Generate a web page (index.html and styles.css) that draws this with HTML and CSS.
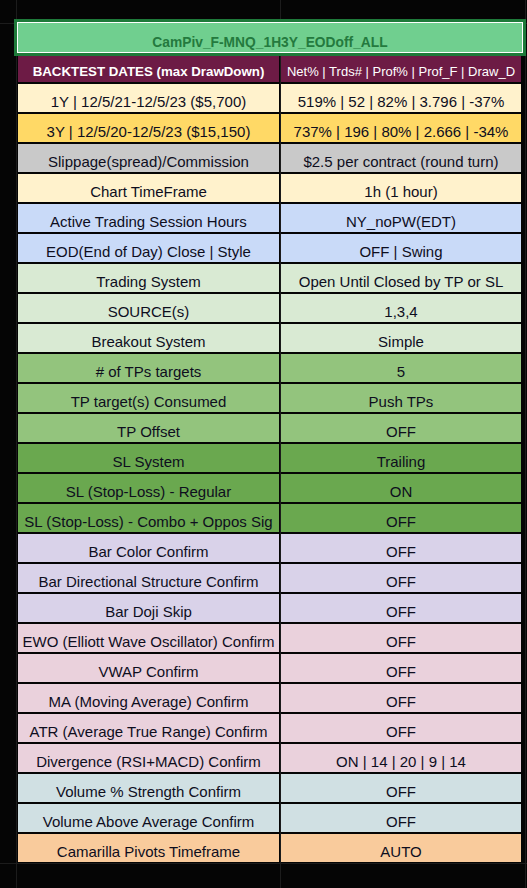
FILE: index.html
```html
<!DOCTYPE html>
<html>
<head>
<meta charset="utf-8">
<link rel="stylesheet" href="styles.css">
</head>
<body>
<div class="sheet">
  <div class="title"><span>CamPiv_F-MNQ_1H3Y_EODoff_ALL</span></div>
  <div class="table">
    <div class="row head"><div class="cell bold">BACKTEST DATES (max DrawDown)</div><div class="cell small">Net% | Trds# | Prof% | Prof_F | Draw_D</div></div>
    <div class="row cream"><div class="cell">1Y | 12/5/21-12/5/23 ($5,700)</div><div class="cell">519% | 52 | 82% | 3.796 | -37%</div></div>
    <div class="row gold"><div class="cell">3Y | 12/5/20-12/5/23 ($15,150)</div><div class="cell">737% | 196 | 80% | 2.666 | -34%</div></div>
    <div class="row grey"><div class="cell">Slippage(spread)/Commission</div><div class="cell">$2.5 per contract (round turn)</div></div>
    <div class="row cream"><div class="cell">Chart TimeFrame</div><div class="cell">1h (1 hour)</div></div>
    <div class="row blue"><div class="cell">Active Trading Session Hours</div><div class="cell">NY_noPW(EDT)</div></div>
    <div class="row blue"><div class="cell">EOD(End of Day) Close | Style</div><div class="cell">OFF | Swing</div></div>
    <div class="row green1"><div class="cell">Trading System</div><div class="cell">Open Until Closed by TP or SL</div></div>
    <div class="row green1"><div class="cell">SOURCE(s)</div><div class="cell">1,3,4</div></div>
    <div class="row green1"><div class="cell">Breakout System</div><div class="cell">Simple</div></div>
    <div class="row green2"><div class="cell"># of TPs targets</div><div class="cell">5</div></div>
    <div class="row green2"><div class="cell">TP target(s) Consumed</div><div class="cell">Push TPs</div></div>
    <div class="row green2"><div class="cell">TP Offset</div><div class="cell">OFF</div></div>
    <div class="row green3"><div class="cell">SL System</div><div class="cell">Trailing</div></div>
    <div class="row green3"><div class="cell">SL (Stop-Loss) - Regular</div><div class="cell">ON</div></div>
    <div class="row green3"><div class="cell">SL (Stop-Loss) - Combo + Oppos Sig</div><div class="cell">OFF</div></div>
    <div class="row lav"><div class="cell">Bar Color Confirm</div><div class="cell">OFF</div></div>
    <div class="row lav"><div class="cell">Bar Directional Structure Confirm</div><div class="cell">OFF</div></div>
    <div class="row lav"><div class="cell">Bar Doji Skip</div><div class="cell">OFF</div></div>
    <div class="row pink"><div class="cell">EWO (Elliott Wave Oscillator) Confirm</div><div class="cell">OFF</div></div>
    <div class="row pink"><div class="cell">VWAP Confirm</div><div class="cell">OFF</div></div>
    <div class="row pink"><div class="cell">MA (Moving Average) Confirm</div><div class="cell">OFF</div></div>
    <div class="row pink"><div class="cell">ATR (Average True Range) Confirm</div><div class="cell">OFF</div></div>
    <div class="row pink"><div class="cell">Divergence (RSI+MACD) Confirm</div><div class="cell">ON | 14 | 20 | 9 | 14</div></div>
    <div class="row teal"><div class="cell">Volume % Strength Confirm</div><div class="cell">OFF</div></div>
    <div class="row teal"><div class="cell">Volume Above Average Confirm</div><div class="cell">OFF</div></div>
    <div class="row peach"><div class="cell">Camarilla Pivots Timeframe</div><div class="cell">AUTO</div></div>
  </div>
</div>
</body>
</html>
```
FILE: styles.css
```css
html, body {
  margin: 0;
  padding: 0;
}
body {
  width: 527px;
  height: 888px;
  overflow: hidden;
  background-color: #050505;
  background-image:
    linear-gradient(to right, transparent 16px, #1c1c1c 16px, #1c1c1c 17px, transparent 17px),
    linear-gradient(to right, transparent 280px, #1c1c1c 280px, #1c1c1c 281px, transparent 281px),
    linear-gradient(to right, transparent 525px, #1c1c1c 525px, #1c1c1c 526px, transparent 526px),
    linear-gradient(to bottom, transparent 23px, #1c1c1c 23px, #1c1c1c 24px, transparent 24px),
    linear-gradient(to bottom, transparent 863px, #1c1c1c 863px, #1c1c1c 864px, transparent 864px);
  font-family: "Liberation Sans", Arial, sans-serif;
  font-size: 15px;
  color: #0e0e1e;
}
.sheet {
  padding-top: 19px;
  padding-left: 14px;
}
.title {
  box-sizing: border-box;
  width: 512px;
  height: 37px;
  border: 3px solid #1e7a3a;
  box-shadow: inset 0 0 0 1px #ffffff;
  background: #70cf8f;
  color: #247a3e;
  font-weight: bold;
  font-size: 13.8px;
  display: flex;
  justify-content: center;
  align-items: flex-end;
  padding-bottom: 3px;
}
.table {
  margin-left: 4px;
  width: 503px;
  display: flex;
  flex-direction: column;
  gap: 2px;
}
.row {
  display: grid;
  grid-template-columns: 261px 240px;
  column-gap: 2px;
  height: 28px;
}
.cell {
  display: flex;
  justify-content: center;
  align-items: flex-end;
  padding-bottom: 1px;
  box-sizing: border-box;
  white-space: nowrap;
  line-height: 18px;
}
.head { height: 26px; }
.head .cell {
  background: #6d1b45;
  color: #ffffff;
  padding-bottom: 1px;
}
.head .bold { font-weight: bold; font-size: 13.3px; }
.head .small { font-size: 13px; }
.cream .cell { background: #fff2cc; }
.gold .cell { background: #ffd966; }
.grey .cell { background: #c9c9c9; }
.blue .cell { background: #c9daf8; }
.green1 .cell { background: #d9ead3; }
.green2 .cell { background: #93c47d; }
.green3 .cell { background: #6aa84f; }
.lav .cell { background: #d9d2e9; }
.pink .cell { background: #ead1dc; }
.teal .cell { background: #d0e0e3; }
.peach .cell { background: #f9cb9c; }
```
